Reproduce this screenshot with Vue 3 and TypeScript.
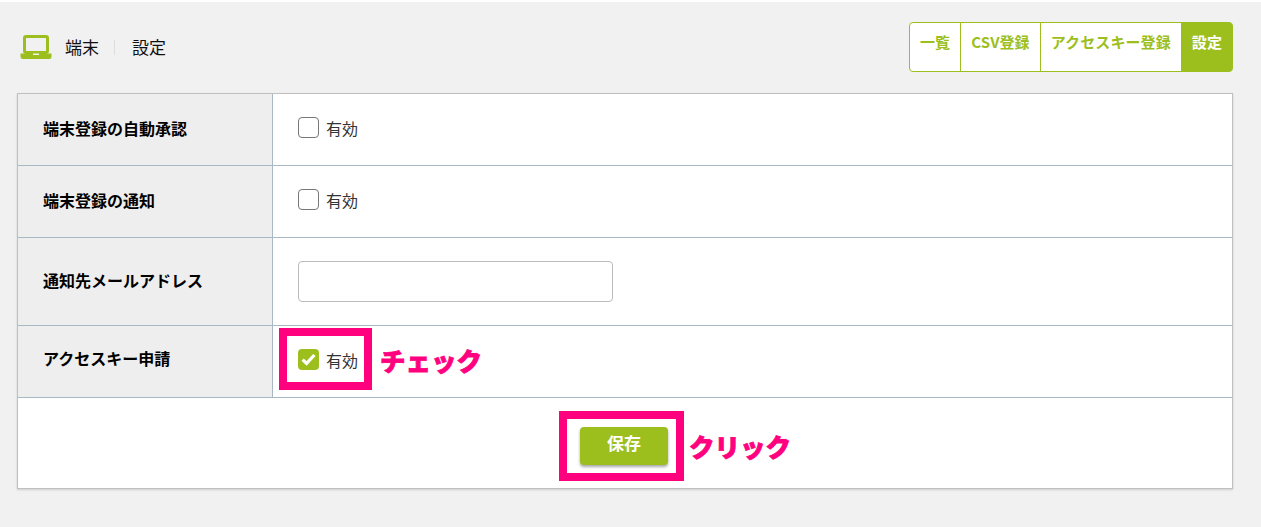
<script setup lang="ts">
const tabs = [
  { label: '一覧', active: false },
  { label: 'CSV登録', active: false },
  { label: 'アクセスキー登録', active: false },
  { label: '設定', active: true },
]
</script>

<template>
  <div class="page">
    <header class="head">
      <div class="title">
        <svg class="laptop" width="32" height="26" viewBox="0 0 32 26" aria-hidden="true">
          <rect x="4.5" y="2.5" width="23" height="16" rx="1.5" fill="none" stroke="#9dbf1e" stroke-width="3" />
          <path d="M0.5 19.5h31v3a2.5 2.5 0 0 1-2.5 2.5H3a2.5 2.5 0 0 1-2.5-2.5z" fill="#9dbf1e" />
          <rect x="13" y="19.5" width="6" height="1.5" fill="#f1f1f1" />
        </svg>
        <span class="crumb">端末</span>
        <span class="sep"></span>
        <span class="crumb">設定</span>
      </div>
      <nav class="tabs">
        <a v-for="t in tabs" :key="t.label" class="tab" :class="{ active: t.active }">{{ t.label }}</a>
      </nav>
    </header>

    <section class="card">
      <div class="row">
        <div class="th">端末登録の自動承認</div>
        <div class="td"><label class="check"><span class="box"></span>有効</label></div>
      </div>
      <div class="row">
        <div class="th">端末登録の通知</div>
        <div class="td"><label class="check"><span class="box"></span>有効</label></div>
      </div>
      <div class="row tall">
        <div class="th">通知先メールアドレス</div>
        <div class="td"><input class="input" type="text" /></div>
      </div>
      <div class="row">
        <div class="th raised">アクセスキー申請</div>
        <div class="td">
          <label class="check">
            <span class="box on">
              <svg width="15" height="13" viewBox="0 0 15 13" aria-hidden="true">
                <path d="M1.6 6.6l4 3.8 7.8-8.4" fill="none" stroke="#fff" stroke-width="3.2" />
              </svg>
            </span>有効
          </label>
          <span class="mark mark-check"></span>
          <span class="note note-check">チェック</span>
        </div>
      </div>
      <div class="foot">
        <button class="save" type="button">保存</button>
        <span class="mark mark-save"></span>
        <span class="note note-save">クリック</span>
      </div>
    </section>
  </div>
</template>

<style scoped>
.page {
  box-sizing: border-box;
  height: 527px;
  padding: 0 28px 0 17px;
  background: #f1f1f1;
  border-top: 2px solid #fff;
  font-family: "Noto Sans CJK JP", "Noto Sans", sans-serif;
  color: #111;
  overflow: hidden;
}
.head {
  display: flex;
  justify-content: space-between;
  align-items: flex-start;
  height: 91px;
  padding-top: 20px;
  box-sizing: border-box;
}
.title {
  display: flex;
  align-items: center;
  height: 50px;
  padding-left: 3px;
}
.laptop { margin-right: 13px; }
.crumb { font-size: 17px; line-height: 1; margin-bottom: 2px; }
.sep {
  width: 1px;
  height: 15px;
  margin: 0 17px 0 15px;
  background: #ddd;
}
.tabs { display: flex; }
.tab {
  box-sizing: border-box;
  height: 50px;
  margin-left: -1px;
  padding: 9px 10px 0;
  border: 1px solid #9dbf1e;
  background: #fff;
  color: #9dbf1e;
  font-size: 15px;
  font-weight: 700;
  line-height: 20px;
  letter-spacing: .1px;
}
.tab:first-child { border-radius: 4px 0 0 4px; margin-left: 0; }
.tab:last-child { border-radius: 0 4px 4px 0; }
.tab.active { background: #9dbf1e; color: #fff; }
.card {
  position: relative;
  box-sizing: border-box;
  height: 396px;
  background: #fff;
  border: 1px solid #c0c0c0;
  box-shadow: 0 1px 2px rgba(0, 0, 0, .15);
}
.row {
  display: flex;
  height: 72px;
  border-bottom: 1px solid #a9b9c4;
  box-sizing: border-box;
}
.row.tall { height: 88px; }
.th {
  display: flex;
  align-items: center;
  box-sizing: border-box;
  width: 255px;
  padding: 0 0 4px 25px;
  background: #eee;
  border-right: 1px solid #a9b9c4;
  font-size: 16px;
  font-weight: 700;
  color: #000;
}
.th.raised { padding-bottom: 7px; }
.td {
  position: relative;
  display: flex;
  align-items: center;
  flex: 1;
  padding-left: 25px;
}
.check {
  display: flex;
  align-items: center;
  margin-bottom: 4px;
  font-size: 16px;
  line-height: 1;
  color: #333;
}
.box {
  display: flex;
  align-items: center;
  justify-content: center;
  box-sizing: border-box;
  width: 21px;
  height: 21px;
  margin-right: 7px;
  border: 1px solid #777;
  border-radius: 4px;
  background: #fff;
}
.box.on { border: 0; background: #9dbf1e; }
.input {
  box-sizing: border-box;
  width: 315px;
  height: 41px;
  border: 1px solid #bbb;
  border-radius: 4px;
  background: #fff;
}
.foot {
  position: relative;
  display: flex;
  justify-content: center;
  align-items: center;
  height: 90px;
  padding: 6px 2px 0 0;
  box-sizing: border-box;
}
.save {
  width: 88px;
  height: 38px;
  border: 0;
  border-radius: 4px;
  background: #9dbf1e;
  box-shadow: 0 2px 3px rgba(0, 0, 0, .35);
  color: #fff;
  font-family: inherit;
  font-size: 17px;
  font-weight: 700;
  line-height: 1;
  padding: 0 0 7px;
}
.mark {
  position: absolute;
  box-sizing: border-box;
  border: 8px solid #ff007f;
}
.mark-check { left: 6px; top: 2px; width: 93px; height: 62px; }
.mark-save { left: 541px; top: 13px; width: 125px; height: 70px; }
.note {
  position: absolute;
  color: #ff007f;
  font-size: 25.5px;
  font-weight: 900;
  line-height: 1;
  white-space: nowrap;
  -webkit-text-stroke: .8px #ff007f;
}
.note-check { left: 107px; top: 21px; }
.note-save { left: 671px; top: 35px; }
</style>
